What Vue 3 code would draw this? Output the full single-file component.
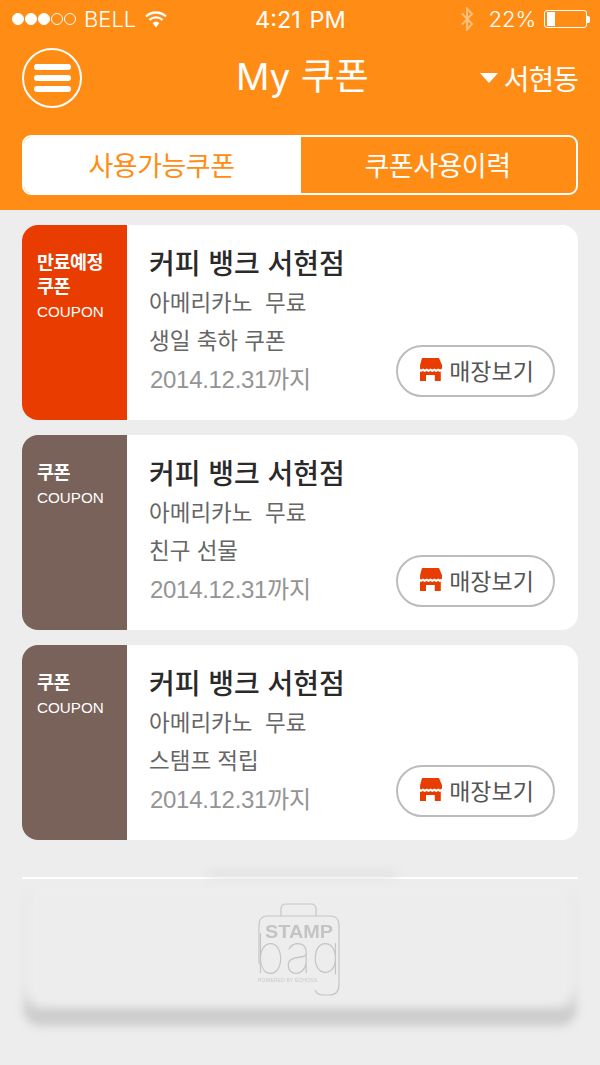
<script setup>
const coupons = [
  { id: 1, expiring: true, label: ['만료예정', '쿠폰'], note: '생일 축하 쿠폰' },
  { id: 2, expiring: false, label: ['쿠폰'], note: '친구 선물' },
  { id: 3, expiring: false, label: ['쿠폰'], note: '스탬프 적립' },
];
</script>

<template>
  <div class="screen">
    <header class="top">
      <div class="status">
        <div class="status-left">
          <span class="dots">
            <i class="dot on"></i><i class="dot on"></i><i class="dot on"></i><i class="dot"></i><i class="dot"></i>
          </span>
          <span class="carrier">BELL</span>
          <svg class="wifi" width="22" height="17" viewBox="0 0 22 17">
            <path d="M1 5.500a14.500 14.500 0 0 1 20 0M4.400 9a9.600 9.600 0 0 1 13.200 0" fill="none" stroke="#fff" stroke-width="2.400" />
            <path d="M7.600 12a5 5 0 0 1 6.800 0L11 16.500z" fill="#fff" />
          </svg>
        </div>
        <span class="clock">4:21 PM</span>
        <div class="status-right">
          <svg class="bt" width="14" height="24" viewBox="0 0 14 24">
            <path d="M2 6.500l10 10.500-5 5.500V1.500l5 5.500L2 17.500" fill="none" stroke="#fff" stroke-opacity=".45" stroke-width="2" />
          </svg>
          <span class="percent">22%</span>
          <span class="battery"><i class="level"></i></span>
          <i class="nub"></i>
        </div>
      </div>

      <div class="nav">
        <button class="menu">
          <i></i><i></i><i></i>
        </button>
        <h1 class="title">My 쿠폰</h1>
        <div class="area"><i class="caret"></i>서현동</div>
      </div>

      <div class="tabs">
        <div class="tab active">사용가능쿠폰</div>
        <div class="tab">쿠폰사용이력</div>
      </div>
    </header>

    <main class="list">
      <article v-for="c in coupons" :key="c.id" class="card">
        <div class="side" :class="{ expiring: c.expiring }">
          <strong v-for="line in c.label" :key="line">{{ line }}</strong>
          <span>COUPON</span>
        </div>
        <div class="body">
          <h2>커피 뱅크 서현점</h2>
          <p class="item">아메리카노&nbsp; 무료</p>
          <p class="item">{{ c.note }}</p>
          <p class="date">2014.12.31까지</p>
          <button class="store">
            <svg class="shop" width="23" height="23" viewBox="0 0 23 23">
              <path d="M3 0h17l3 7v3.500l-1.900 1-1.900-1-1.900 1-1.900-1-1.900 1-1.900-1-1.900 1-1.900-1-1.900 1-1.900-1-1.900 1-1-.5V7z" fill="#e93c00" />
              <path d="M1 13.500l.9.500 1.900-1 1.900 1 1.900-1 1.900 1 1.900-1 1.900 1 1.900-1 1.900 1 1.900-1 1.900 1 .9-.5V23h-6v-6H7v6H1z" fill="#e93c00" />
            </svg>
            매장보기
          </button>
        </div>
      </article>
    </main>

    <footer class="foot">
      <div class="rule"></div>
      <div class="tray">
        <svg class="logo" width="84" height="96" viewBox="0 0 84 96">
          <defs>
            <clipPath id="bag-clip"><rect x="-4" y="0" width="92" height="72.500" /></clipPath>
          </defs>
          <path d="M24 14V7q0-5 5-5h25q5 0 5 5v7" fill="none" stroke="#c6c6c6" stroke-width="1.200" />
          <path d="M2 62V23q0-9 9-9h62q9 0 9 9v60q0 10-10 10h-6q-6 0-8-5" fill="none" stroke="#c6c6c6" stroke-width="1.200" />
          <text x="8" y="36" class="stamp" textLength="68" lengthAdjust="spacingAndGlyphs">STAMP</text>
          <g clip-path="url(#bag-clip)">
            <text x="-2" y="71" class="bag" textLength="86" lengthAdjust="spacingAndGlyphs">bag</text>
          </g>
          <text x="1" y="80" class="powered" textLength="59">POWERED BY ECHOSS</text>
        </svg>
      </div>
    </footer>
  </div>
</template>

<style>
html,
body {
  margin: 0;
  background: #ececec;
}
</style>

<style scoped>
.screen {
  width: 600px;
  height: 1065px;
  overflow: hidden;
  background: #ededed;
  font-family: "Liberation Sans", "Noto Sans CJK KR", sans-serif;
}

.top {
  height: 210px;
  box-sizing: border-box;
  background: #ff8c14;
  color: #fff;
  padding: 0 22px;
}

.status {
  height: 40px;
  display: flex;
  align-items: center;
  justify-content: space-between;
  margin: 0 -12px 0 -10px;
  position: relative;
  font-family: Inter, "Liberation Sans", sans-serif;
  font-size: 22px;
  font-weight: 300;
  top: -1px;
}

.status-left,
.status-right {
  display: flex;
  align-items: center;
}

.dots {
  display: flex;
  gap: 1px;
  margin-right: 8px;
}

.dot {
  width: 12px;
  height: 12px;
  box-sizing: border-box;
  border: 1px solid #fff;
  border-radius: 50%;
}

.dot.on {
  background: #fff;
}

.wifi {
  margin-left: 9px;
}

.clock {
  position: absolute;
  left: 243px;
  top: 6px;
  font-size: 23.500px;
  font-weight: 400;
  word-spacing: 2px;
}

.bt {
  margin-right: 14px;
}

.percent {
  margin-right: 8px;
}

.battery {
  width: 43px;
  height: 18px;
  box-sizing: border-box;
  border: 1px solid #fff;
  border-radius: 3px;
  padding: 1px 2px;
}

.level {
  display: block;
  width: 8px;
  height: 100%;
  background: #fff;
}

.nub {
  width: 3px;
  height: 7px;
  background: #fff;
  border-radius: 0 2px 2px 0;
}

.nav {
  height: 76px;
  display: flex;
  align-items: center;
  justify-content: space-between;
  position: relative;
}

.menu {
  width: 60px;
  height: 60px;
  box-sizing: border-box;
  border: 2px solid #fff;
  border-radius: 50%;
  background: none;
  padding: 0;
  display: flex;
  flex-direction: column;
  align-items: center;
  justify-content: center;
  gap: 5px;
}

.menu i {
  width: 37px;
  height: 6px;
  border-radius: 3px;
  background: #fff;
}

.title {
  position: absolute;
  left: 214px;
  top: 15px;
  margin: 0;
  font-family: Inter, "Noto Sans CJK KR", sans-serif;
  font-size: 37px;
  font-weight: 400;
  line-height: 44px;
}

.area {
  display: flex;
  align-items: center;
  font-size: 28px;
  letter-spacing: -1px;
}

.caret {
  width: 0;
  height: 0;
  border-left: 9px solid transparent;
  border-right: 9px solid transparent;
  border-top: 10px solid #fff;
  margin-right: 6px;
}

.tabs {
  height: 60px;
  margin-top: 19px;
  box-sizing: border-box;
  display: grid;
  grid-template-columns: 277px 1fr;
  border: 2px solid #fff;
  border-radius: 9px;
  overflow: hidden;
  font-size: 27px;
  letter-spacing: -0.500px;
}

.tab {
  display: flex;
  align-items: center;
  justify-content: center;
  padding: 0 2px 2px 0;
}

.tab.active {
  background: #fff;
  color: #ff8c14;
}

.list {
  padding: 15px 22px 0;
  display: flex;
  flex-direction: column;
  gap: 15px;
}

.card {
  height: 195px;
  display: flex;
  background: #fff;
  border-radius: 16px;
  overflow: hidden;
}

.side {
  width: 105px;
  flex: none;
  box-sizing: border-box;
  padding: 26px 0 0 15px;
  background: #78625a;
  color: #fff;
  display: flex;
  flex-direction: column;
}

.side.expiring {
  background: #e93c00;
}

.side strong {
  font-size: 18.500px;
  line-height: 24px;
  letter-spacing: -0.500px;
}

.side span {
  font-size: 15.200px;
  line-height: 26px;
}

.body {
  flex: 1;
  padding: 20px 0 0 22px;
  position: relative;
  color: #666;
}

.body h2 {
  margin: 0;
  font-size: 28px;
  font-weight: 500;
  line-height: 40px;
  color: #2a2a2a;
}

.item {
  margin: 0;
  font-size: 22.500px;
  line-height: 38px;
}

.date {
  margin: -1px 0 0 1px;
  font-size: 24px;
  line-height: 40px;
  color: #949494;
  letter-spacing: -0.300px;
}

.store {
  position: absolute;
  right: 23px;
  bottom: 23px;
  width: 159px;
  height: 52px;
  box-sizing: border-box;
  border: 2px solid #bcbcbc;
  border-radius: 26px;
  background: #fff;
  display: flex;
  align-items: center;
  justify-content: center;
  gap: 7px;
  padding: 0 0 2px 2px;
  font: inherit;
  font-size: 23px;
  color: #555;
}

.shop {
  margin-top: -2px;
}

.foot {
  padding: 37px 22px 0;
}

.rule {
  height: 2px;
  background: #fff;
  position: relative;
  z-index: 1;
}

.rule::before {
  content: "";
  position: absolute;
  left: 185px;
  width: 190px;
  top: -5px;
  height: 5px;
  background: #dedede;
  filter: blur(5px);
  z-index: -1;
}

.tray {
  position: relative;
  height: 130px;
  margin-top: 6px;
  display: flex;
  justify-content: center;
  align-items: flex-start;
}

.tray::before {
  content: "";
  position: absolute;
  left: 1px;
  right: 1px;
  top: 6px;
  bottom: -11px;
  border-radius: 18px;
  background: linear-gradient(#e9e9e9 70%, #cdcdcd 90%);
  filter: blur(4px);
}

.tray::after {
  content: "";
  position: absolute;
  left: 7px;
  right: 7px;
  top: 0;
  bottom: 8px;
  border-radius: 14px;
  background: #ededed;
  filter: blur(5px);
}

.logo {
  position: relative;
  z-index: 1;
  overflow: visible;
  margin: 17px 0 0 -2px;
  filter: blur(0.4px);
}

.stamp {
  font-family: "Liberation Sans", sans-serif;
  font-size: 19px;
  font-weight: 700;
  fill: #c4c4c4;
}

.bag {
  font-family: Inter, sans-serif;
  font-weight: 100;
  font-size: 54px;
  fill: #c4c4c4;
}

.powered {
  font-family: "Liberation Sans", sans-serif;
  font-size: 5px;
  fill: #c8c8c8;
}
</style>
